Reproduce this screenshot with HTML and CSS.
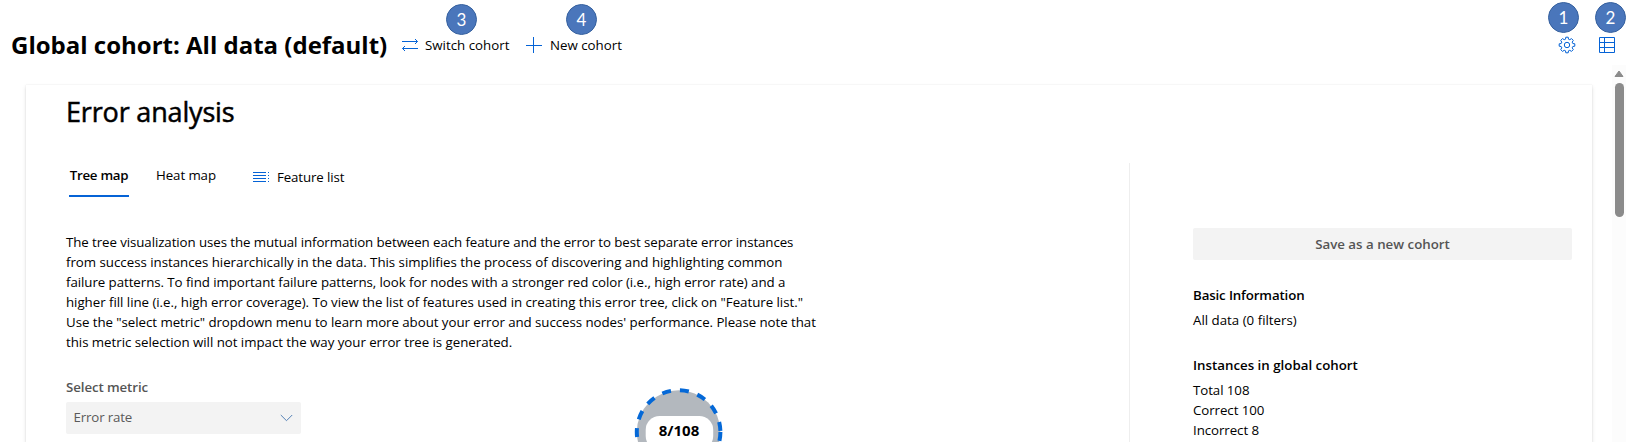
FILE: index.html
```html
<!DOCTYPE html>
<html lang="en">
<head>
<meta charset="utf-8">
<title>Error analysis</title>
<link rel="stylesheet" href="styles.css">
</head>
<body>
<header class="topbar">
  <h1 class="cohort-title">Global cohort: All data (default)</h1>
  <button class="command switch">
    <svg class="icon" width="18" height="16" viewBox="0 0 18 16"><path d="M1 4.5H16.5M14 2L16.5 4.5L14 7M17 11.5H1.5M4 9L1.5 11.5L4 14"/></svg>
    <span>Switch cohort</span>
    <span class="badge">3</span>
  </button>
  <button class="command new">
    <svg class="icon" width="18" height="16" viewBox="0 0 18 16"><path d="M1 8.5H17M8.5 0V16"/></svg>
    <span>New cohort</span>
    <span class="badge">4</span>
  </button>
  <div class="tools">
    <button class="tool settings">
      <svg class="icon" width="18" height="18" viewBox="0 0 18 18"><path d="M7.8 1.2H10.2L10.5 3.2L11.8 3.7L13.5 2.6L15.3 4.4L14.2 6.1L14.8 7.5L16.8 7.8V10.2L14.8 10.5L14.2 11.9L15.3 13.6L13.5 15.4L11.8 14.3L10.5 14.8L10.2 16.8H7.8L7.5 14.8L6.2 14.3L4.5 15.4L2.7 13.6L3.8 11.9L3.2 10.5L1.2 10.2V7.8L3.2 7.5L3.8 6.1L2.7 4.4L4.5 2.6L6.2 3.7L7.5 3.2Z"/><circle cx="9" cy="9" r="2.7"/></svg>
      <span class="badge">1</span>
    </button>
    <button class="tool table">
      <svg class="icon" width="16" height="16" viewBox="0 0 16 16"><path d="M.5 .5H15.5V15.5H.5ZM.5 5.5H15.5M.5 10.5H15.5M5.5 .5V15.5"/></svg>
      <span class="badge">2</span>
    </button>
  </div>
</header>
<div class="viewport">
  <main class="card">
    <h2 class="section-title">Error analysis</h2>
    <div class="columns">
      <section class="explore">
        <nav class="tabs">
          <button class="tab active">Tree map</button>
          <button class="tab heat">Heat map</button>
          <button class="feature-list">
            <svg class="icon" width="17" height="12" viewBox="0 0 17 12"><path d="M0 1.5H13M0 4.5H13M0 7.5H13M0 10.5H13M15 1.5H16M15 4.5H16M15 7.5H16M15 10.5H16"/></svg>
            <span>Feature list</span>
          </button>
        </nav>
        <p class="description">
          <span class="line l1">The tree visualization uses the mutual information between each feature and the error to best separate error instances</span>
          <span class="line l2">from success instances hierarchically in the data. This simplifies the process of discovering and highlighting common</span>
          <span class="line l3">failure patterns. To find important failure patterns, look for nodes with a stronger red color (i.e., high error rate) and a</span>
          <span class="line l4">higher fill line (i.e., high error coverage). To view the list of features used in creating this error tree, click on "Feature list."</span>
          <span class="line l5">Use the "select metric" dropdown menu to learn more about your error and success nodes' performance. Please note that</span>
          <span class="line l6">this metric selection will not impact the way your error tree is generated.</span>
        </p>
        <div class="tree-row">
          <div class="metric">
            <label class="metric-label">Select metric</label>
            <div class="dropdown"><span>Error rate</span>
              <svg class="chevron" width="13" height="8" viewBox="0 0 13 8"><path d="M.8 1L6.5 6.7L12.2 1"/></svg>
            </div>
          </div>
          <svg class="tree" width="100" height="56" viewBox="0 0 100 56">
            <circle class="node" cx="49.6" cy="46" r="41.8"/>
            <rect class="pill" x="16.7" y="30" width="67.5" height="34" rx="14"/>
            <text class="node-label" x="50" y="49.5" text-anchor="middle">8/108</text>
          </svg>
        </div>
      </section>
      <aside class="cohort-info">
        <button class="save">Save as a new cohort</button>
        <h3 class="info-title basic">Basic Information</h3>
        <p class="info-line">All data (0 filters)</p>
        <h3 class="info-title">Instances in global cohort</h3>
        <p class="info-line count">Total 108</p>
        <p class="info-line count">Correct 100</p>
        <p class="info-line count">Incorrect 8</p>
      </aside>
    </div>
  </main>
  <div class="scrollbar">
    <svg class="arrow" width="10" height="8" viewBox="0 0 10 8"><path d="M5 1L9 6.5H1Z"/></svg>
    <div class="thumb"></div>
  </div>
</div>
</body>
</html>
```
FILE: styles.css
```css
* { box-sizing: border-box; }
body {
  margin: 0;
  width: 1630px;
  height: 442px;
  overflow: hidden;
  display: flex;
  flex-direction: column;
  background: #fff;
  color: #000;
  font: 13.3px/20px "Open Sans", "Noto Sans", sans-serif;
}
h1, h2, h3, p { margin: 0; }
button { padding: 0; border: 0; background: none; font: inherit; color: inherit; white-space: nowrap; }
.icon { fill: none; stroke: #0563d6; stroke-width: 1; flex: none; }

.topbar { flex: none; height: 65px; display: flex; align-items: flex-start; padding-left: 11px; }
.cohort-title { width: 390px; padding-top: 29px; font-size: 24px; line-height: 32px; font-weight: 700; white-space: nowrap; }
.command { position: relative; display: flex; align-items: center; gap: 6px; height: 20px; margin-top: 35px; }
.switch { width: 124px; }
.new { gap: 7px; }
.tools { display: flex; margin-left: auto; padding: 36px 15px 0 0; gap: 23px; }
.tool { position: relative; display: flex; height: 18px; align-items: center; }
.badge {
  position: absolute;
  width: 31px;
  height: 31px;
  border: 1px solid #36619f;
  border-radius: 50%;
  background: #4a76bb;
  color: #fff;
  font: 17px/29px Lato, sans-serif;
  text-align: center;
}
.switch .badge { left: 45px; top: -31px; }
.new .badge { left: 41px; top: -31px; }
.settings .badge { left: -10px; top: -34px; }
.table .badge { left: -4px; top: -34px; }

.viewport { flex: 1; display: flex; min-height: 0; padding-left: 26px; overflow: hidden; }
.card {
  display: flex;
  flex-direction: column;
  width: 1566px;
  margin-top: 20px;
  padding-left: 40px;
  background: #fff;
  box-shadow: 0 2px 4px rgba(0, 0, 0, .13), 0 0 1px rgba(0, 0, 0, .13);
}
.section-title {
  flex: none;
  height: 78px;
  padding-top: 9px;
  font-size: 27px;
  line-height: 36px;
  font-weight: 400;
  letter-spacing: -.17px;
  -webkit-text-stroke: .5px #000;
}
.columns { display: flex; flex: 1; }
.explore { width: 1063px; }
.tabs { display: flex; height: 69px; padding-left: 3px; align-items: flex-start; }
.tab { height: 34px; padding-top: 2px; display: flex; justify-content: center; }
.active { width: 60px; border-bottom: 2px solid #0563d6; font-weight: 600; letter-spacing: -.25px; }
.heat { margin-left: 27px; width: 60px; letter-spacing: -.1px; }
.feature-list { display: flex; align-items: center; gap: 7px; height: 20px; margin: 4px 0 0 37px; letter-spacing: -.12px; }
.description { height: 140px; }
.line { display: block; width: max-content; white-space: nowrap; }
.l1 { letter-spacing: -.084px; }
.l2 { letter-spacing: -.024px; }
.l3 { letter-spacing: -.061px; }
.l4 { letter-spacing: -.036px; }
.l5 { letter-spacing: -.054px; }
.l6 { letter-spacing: -.038px; }
.tree-row { display: flex; align-items: flex-start; height: 70px; }
.metric { width: 563px; padding-top: 5px; }
.metric-label { display: block; height: 25px; color: #555; font-weight: 600; letter-spacing: -.1px; }
.dropdown {
  display: flex;
  align-items: center;
  justify-content: space-between;
  width: 235px;
  height: 32px;
  padding: 0 8px 0 7.5px;
  border-radius: 2px;
  background: #f3f3f3;
  color: #5a5a5a;
  letter-spacing: -.15px;
}
.dropdown span { padding-bottom: 2px; }
.chevron { fill: none; stroke: #5480b5; stroke-width: 1; }
.tree { overflow: visible; margin-top: 14px; }
.node { fill: #b3b8be; stroke: #0468d7; stroke-width: 4; stroke-dasharray: 9 9; }
.pill { fill: #fff; }
.node-label { font: 700 15px "Open Sans", sans-serif; }

.cohort-info { width: 444px; border-left: 1px solid #eee; padding: 65px 0 0 63px; }
.save { display: block; width: 379px; height: 32px; margin-bottom: 25px; border-radius: 2px; background: #f3f3f3; color: #555; font-weight: 600; }
.info-title { font-size: inherit; line-height: 20px; font-weight: 600; margin-bottom: 5px; }
.basic { letter-spacing: -.14px; }
.count { letter-spacing: -.07px; }
.info-line + .info-title { margin-top: 25px; }

.scrollbar { width: 14px; margin-left: 20px; background: #fcfcfc; display: flex; flex-direction: column; align-items: center; padding-top: 5px; }
.arrow { fill: #8b8b8b; stroke: #8b8b8b; stroke-width: 1; stroke-linejoin: round; }
.thumb { width: 9px; height: 134px; margin-top: 5px; border-radius: 5px; background: #8b8b8b; }
```
